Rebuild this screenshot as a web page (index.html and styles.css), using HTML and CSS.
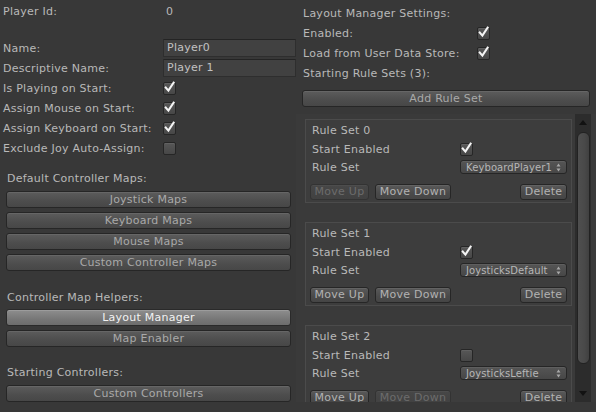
FILE: index.html
```html
<!DOCTYPE html>
<html>
<head>
<meta charset="utf-8">
<link rel="stylesheet" href="styles.css">
</head>
<body>
<div class="page">
  <div class="left">
    <div class="row"><span class="lbl">Player Id:</span><span class="val">0</span></div>
    <div class="fields">
      <div class="row"><span class="lbl">Name:</span><div class="field">Player0</div></div>
      <div class="row"><span class="lbl">Descriptive Name:</span><div class="field">Player 1</div></div>
      <div class="row"><span class="lbl">Is Playing on Start:</span><span class="cb on"><svg viewBox="0 0 13 13"><path d="M2.8 6.6 L5.4 9.6 L10.6 1.6"/></svg></span></div>
      <div class="row"><span class="lbl">Assign Mouse on Start:</span><span class="cb on"><svg viewBox="0 0 13 13"><path d="M2.8 6.6 L5.4 9.6 L10.6 1.6"/></svg></span></div>
      <div class="row"><span class="lbl">Assign Keyboard on Start:</span><span class="cb on"><svg viewBox="0 0 13 13"><path d="M2.8 6.6 L5.4 9.6 L10.6 1.6"/></svg></span></div>
      <div class="row"><span class="lbl">Exclude Joy Auto-Assign:</span><span class="cb"></span></div>
    </div>

    <div class="section-label s1">Default Controller Maps:</div>
    <div class="btn-stack m2">
      <div class="btn">Joystick Maps</div>
      <div class="btn">Keyboard Maps</div>
      <div class="btn">Mouse Maps</div>
      <div class="btn">Custom Controller Maps</div>
    </div>

    <div class="section-label s2">Controller Map Helpers:</div>
    <div class="btn-stack m1">
      <div class="btn active">Layout Manager</div>
      <div class="btn">Map Enabler</div>
    </div>

    <div class="section-label s3">Starting Controllers:</div>
    <div class="btn-stack m2">
      <div class="btn">Custom Controllers</div>
    </div>
  </div>

  <div class="right">
    <div class="rrow"><span class="rlbl">Layout Manager Settings:</span></div>
    <div class="rrow"><span class="rlbl">Enabled:</span><span class="cb on"><svg viewBox="0 0 13 13"><path d="M2.8 6.6 L5.4 9.6 L10.6 1.6"/></svg></span></div>
    <div class="rrow"><span class="rlbl">Load from User Data Store:</span><span class="cb on"><svg viewBox="0 0 13 13"><path d="M2.8 6.6 L5.4 9.6 L10.6 1.6"/></svg></span></div>
    <div class="rrow"><span class="rlbl">Starting Rule Sets (3):</span></div>
    <div class="btn add">Add Rule Set</div>

    <div class="scroll">
      <div class="scroll-content">
        <div class="box">
          <div class="brow title">Rule Set 0</div>
          <div class="brow first"><span class="blbl">Start Enabled</span><span class="cb on"><svg viewBox="0 0 13 13"><path d="M2.8 6.6 L5.4 9.6 L10.6 1.6"/></svg></span></div>
          <div class="brow"><span class="blbl">Rule Set</span><div class="dd"><span>KeyboardPlayer1</span><svg class="ddarr" viewBox="0 0 5 9"><path d="M2.5 0.5 L4.5 3.5 L0.5 3.5 Z M0.5 5.5 L4.5 5.5 L2.5 8.5 Z"/></svg></div></div>
          <div class="bbtns">
            <div class="sbtn up disabled">Move Up</div>
            <div class="sbtn down">Move Down</div>
            <div class="sbtn del">Delete</div>
          </div>
        </div>
        <div class="box">
          <div class="brow title">Rule Set 1</div>
          <div class="brow first"><span class="blbl">Start Enabled</span><span class="cb on"><svg viewBox="0 0 13 13"><path d="M2.8 6.6 L5.4 9.6 L10.6 1.6"/></svg></span></div>
          <div class="brow"><span class="blbl">Rule Set</span><div class="dd"><span>JoysticksDefault</span><svg class="ddarr" viewBox="0 0 5 9"><path d="M2.5 0.5 L4.5 3.5 L0.5 3.5 Z M0.5 5.5 L4.5 5.5 L2.5 8.5 Z"/></svg></div></div>
          <div class="bbtns">
            <div class="sbtn up">Move Up</div>
            <div class="sbtn down">Move Down</div>
            <div class="sbtn del">Delete</div>
          </div>
        </div>
        <div class="box">
          <div class="brow title">Rule Set 2</div>
          <div class="brow first"><span class="blbl">Start Enabled</span><span class="cb"></span></div>
          <div class="brow"><span class="blbl">Rule Set</span><div class="dd"><span>JoysticksLeftie</span><svg class="ddarr" viewBox="0 0 5 9"><path d="M2.5 0.5 L4.5 3.5 L0.5 3.5 Z M0.5 5.5 L4.5 5.5 L2.5 8.5 Z"/></svg></div></div>
          <div class="bbtns">
            <div class="sbtn up">Move Up</div>
            <div class="sbtn down disabled">Move Down</div>
            <div class="sbtn del">Delete</div>
          </div>
        </div>
      </div>
      <div class="scrollbar">
        <div class="arrow-up"></div>
        <div class="thumb"></div>
        <div class="track-rest"></div>
        <div class="arrow-down"></div>
      </div>
    </div>
  </div>
</div>
</body>
</html>
```

FILE: styles.css
```css
html, body {
  margin: 0;
  padding: 0;
  background: #383838;
}
body {
  width: 596px;
  height: 412px;
  overflow: hidden;
  font-family: "DejaVu Sans", "Liberation Sans", sans-serif;
  font-size: 11px;
  letter-spacing: 0.25px;
  color: #b9b9b9;
}
.page {
  display: grid;
  grid-template-columns: 296px 300px;
  height: 412px;
}

/* ---------- left column ---------- */
.left {
  display: flex;
  flex-direction: column;
  padding-top: 1px;
}
.row {
  display: flex;
  align-items: center;
  height: 20px;
}
.lbl {
  width: 160px;
  padding-left: 3px;
  white-space: nowrap;
}
.val {
  padding-left: 3px;
}
.fields {
  margin-top: 17px;
  display: flex;
  flex-direction: column;
}
.field {
  box-sizing: border-box;
  width: 133px;
  height: 18px;
  line-height: 16px;
  padding-left: 3px;
  background: #414141;
  border: 1px solid #2e2e2e;
  border-top-color: #242424;
  color: #c2c2c2;
}
.section-label {
  height: 20px;
  line-height: 20px;
  padding-left: 7px;
}
.s1 { margin-top: 11px; }
.s2 { margin-top: 17px; }
.s3 { margin-top: 16px; }
.btn-stack {
  display: flex;
  flex-direction: column;
  gap: 4px;
  margin-left: 6px;
  margin-right: 5px;
}
.m1 { margin-top: 1px; }
.m2 { margin-top: 2px; }

.btn {
  box-sizing: border-box;
  height: 17px;
  line-height: 15px;
  text-align: center;
  color: #a9a9a9;
  background: linear-gradient(#5c5c5c, #4d4d4d 60%, #474747);
  border: 1px solid #262626;
  border-radius: 3px;
  box-shadow: inset 0 1px 0 #666;
  white-space: nowrap;
}
.btn.active {
  color: #f2f2f2;
  background: linear-gradient(#8e8e8e, #777 60%, #6d6d6d);
  border-color: #2a2a2a;
  box-shadow: inset 0 1px 0 #9c9c9c;
}

/* ---------- checkbox ---------- */
.cb {
  box-sizing: border-box;
  width: 13px;
  height: 13px;
  border: 1px solid #262626;
  border-radius: 2px;
  background: linear-gradient(#575757, #474747);
  box-shadow: inset 0 1px 0 #616161;
  position: relative;
  display: inline-block;
}
.cb svg {
  position: absolute;
  left: -1px;
  top: -2px;
  width: 13px;
  height: 13px;
  overflow: visible;
}
.cb svg path {
  fill: none;
  stroke: #f4f4f4;
  stroke-width: 2.1;
  stroke-linecap: square;
}

/* ---------- right column ---------- */
.right {
  display: flex;
  flex-direction: column;
  padding-top: 3px;
}
.rrow {
  display: flex;
  align-items: center;
  height: 20px;
}
.rlbl {
  width: 174px;
  padding-left: 7px;
  white-space: nowrap;
}
.btn.add {
  margin-top: 7px;
  margin-left: 6px;
  width: 288px;
}
.scroll {
  margin-top: 7px;
  height: 288px;
  display: flex;
  background: #3a3a3a;
}
.scroll-content {
  width: 279px;
  overflow: hidden;
  padding-top: 5px;
  box-sizing: border-box;
  padding-left: 9px;
}
.box {
  box-sizing: border-box;
  width: 267px;
  height: 84px;
  border: 1px solid #4b4b4b;
  background: #3d3d3d;
  padding: 1px 4px 2px 4px;
  margin-bottom: 19px;
  display: flex;
  flex-direction: column;
}
.brow {
  display: flex;
  align-items: center;
  height: 18px;
  flex: none;
}
.brow.title {
  padding-left: 2px;
}
.brow.first {
  margin-top: 1px;
}
.blbl {
  width: 148px;
  padding-left: 2px;
  white-space: nowrap;
}
.dd {
  box-sizing: border-box;
  width: 107px;
  height: 14px;
  display: flex;
  align-items: center;
  justify-content: space-between;
  padding: 0 5px 0 5px;
  font-size: 10px;
  letter-spacing: 0.1px;
  color: #b7b7b7;
  background: linear-gradient(#555, #474747);
  border: 1px solid #262626;
  border-radius: 3px;
  box-shadow: inset 0 1px 0 #5f5f5f;
}
.ddarr {
  width: 5px;
  height: 9px;
  fill: #a8a8a8;
  flex: none;
}
.bbtns {
  display: flex;
  gap: 6px;
  margin-top: 8px;
  flex: none;
}
.sbtn {
  box-sizing: border-box;
  height: 16px;
  line-height: 14px;
  text-align: center;
  color: #b2b2b2;
  background: linear-gradient(#595959, #4a4a4a 60%, #454545);
  border: 1px solid #262626;
  border-radius: 3px;
  box-shadow: inset 0 1px 0 #636363;
  white-space: nowrap;
}
.sbtn.up { width: 59px; }
.sbtn.down { width: 76px; }
.sbtn.del { width: 47px; margin-left: auto; }
.sbtn.disabled {
  color: #6c6c6c;
  background: linear-gradient(#474747, #414141);
  border-color: #333;
  box-shadow: inset 0 1px 0 #4d4d4d;
}

/* ---------- scrollbar ---------- */
.scrollbar {
  width: 16px;
  background: #2c2c2c;
  display: flex;
  flex-direction: column;
  align-items: center;
}
.arrow-up, .arrow-down {
  height: 16px;
  width: 16px;
  flex: none;
  position: relative;
}
.arrow-up::after, .arrow-down::after {
  content: "";
  position: absolute;
  left: 4px;
  width: 0;
  height: 0;
  border-left: 4px solid transparent;
  border-right: 4px solid transparent;
}
.arrow-up::after {
  top: 6px;
  border-bottom: 5px solid #121212;
}
.arrow-down::after {
  top: 5px;
  border-top: 5px solid #121212;
}
.thumb {
  box-sizing: border-box;
  margin-top: 2px;
  width: 13px;
  height: 232px;
  border-radius: 6px;
  background: linear-gradient(90deg, #4f4f4f, #494949 60%, #404040);
  border: 1px solid #222;
  flex: none;
}
.track-rest {
  flex: 1;
}
```
